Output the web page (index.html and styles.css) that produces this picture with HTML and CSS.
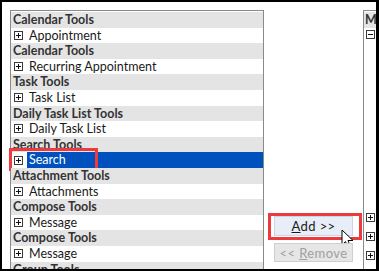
FILE: index.html
```html
<!DOCTYPE html>
<html>
<head>
<meta charset="utf-8">
<link rel="stylesheet" href="styles.css">
</head>
<body>
<div class="frame">
  <div class="list">
    <div class="row head">Calendar Tools</div>
    <div class="row item"><span class="box plus"></span><span class="label">Appointment</span></div>
    <div class="row head">Calendar Tools</div>
    <div class="row item"><span class="box plus"></span><span class="label">Recurring Appointment</span></div>
    <div class="row head">Task Tools</div>
    <div class="row item"><span class="box plus"></span><span class="label">Task List</span></div>
    <div class="row head">Daily Task List Tools</div>
    <div class="row item"><span class="box plus"></span><span class="label">Daily Task List</span></div>
    <div class="row head">Search Tools</div>
    <div class="row item selected"><span class="box plus"></span><span class="label">Search</span><span class="callout search-callout"></span></div>
    <div class="row head">Attachment Tools</div>
    <div class="row item"><span class="box plus"></span><span class="label">Attachments</span></div>
    <div class="row head">Compose Tools</div>
    <div class="row item"><span class="box plus"></span><span class="label">Message</span></div>
    <div class="row head">Compose Tools</div>
    <div class="row item"><span class="box plus"></span><span class="label">Message</span></div>
    <div class="row head">Group Tools</div>
  </div>
  <div class="middle">
    <div class="btn add"><span><u>A</u>dd &gt;&gt;</span><span class="callout add-callout"></span>
      <svg class="cursor" width="14" height="21" viewBox="0 0 14 21"><path d="M1 1 L1 16 L4.5 12.5 L7 18.5 L9.5 17.5 L7 11.5 L12 11.5 Z" fill="#fff" stroke="#000" stroke-width="1" stroke-linejoin="round"/></svg>
    </div>
    <div class="btn remove"><span>&lt;&lt; <u>R</u>emove</span></div>
  </div>
  <div class="right">
    <div class="rhead">Ma</div>
    <div class="rtop"><span class="box minus"></span></div>
    <div class="rrows">
      <div class="rrow"><span class="box plus"></span></div>
      <div class="rrow"><span class="box plus"></span></div>
      <div class="rrow"><span class="box plus"></span></div>
      <div class="rrow"><span class="box plus"></span></div>
    </div>
  </div>
</div>
</body>
</html>
```

FILE: styles.css
```css
html, body {
  margin: 0;
  padding: 0;
  background: #fff;
}
.frame {
  box-sizing: border-box;
  width: 379px;
  height: 271px;
  border: 2px solid #000;
  border-right-width: 3px;
  overflow: hidden;
  display: flex;
  align-items: flex-start;
  padding: 8px 0 0 8px;
  background: #fff;
  font-family: Lato, "Noto Sans", sans-serif;
  font-size: 12.5px;
  color: #1a1a1a;
}
.list {
  box-sizing: border-box;
  width: 254px;
  flex: none;
  border: 1px solid #8a8a8a;
  padding-top: 1px;
  height: 300px;
}
.row {
  height: 15.6px;
  line-height: 15.6px;
  display: flex;
  align-items: center;
  white-space: nowrap;
  position: relative;
}
.head {
  background: #e4e4e4;
  font-weight: bold;
  color: #333;
  padding-left: 2px;
}
.item {
  padding-left: 3px;
}
.label {
  padding-left: 6px;
  padding-right: 2px;
}
.selected .label {
  background: #0050be;
  color: #fff;
  flex: 1;
  height: 100%;
  margin-left: 4px;
  padding-left: 2px;
}
.box {
  box-sizing: border-box;
  width: 9px;
  height: 9px;
  border: 1px solid #3a3a3a;
  position: relative;
  flex: none;
  background: #fff;
}
.box::before {
  content: "";
  position: absolute;
  left: 1px;
  top: 3px;
  width: 5px;
  height: 1px;
  background: #111;
}
.plus::after {
  content: "";
  position: absolute;
  left: 3px;
  top: 1px;
  width: 1px;
  height: 5px;
  background: #111;
}
.callout {
  position: absolute;
  border: 3px solid #ec3b3f;
  box-sizing: border-box;
}
.search-callout {
  left: -2px;
  top: -4px;
  width: 89px;
  height: 23px;
}
.middle {
  width: 99px;
  flex: none;
  display: flex;
  flex-direction: column;
  align-items: center;
  padding-top: 206px;
  gap: 7px;
}
.btn {
  box-sizing: border-box;
  width: 79px;
  height: 20px;
  display: flex;
  align-items: center;
  justify-content: center;
  position: relative;
  letter-spacing: 0.4px;
  white-space: pre;
  font-size: 13px;
}
.add {
  background: #e8eef7;
  border: 1px solid #c9d5e6;
  color: #1a1a1a;
}
.add-callout {
  left: -7px;
  top: -4px;
  width: 94px;
  height: 27px;
}
.remove {
  background: #e6e6e6;
  border: 1px solid #cfcfcf;
  color: #a0a0a0;
  height: 19px;
}
.cursor {
  position: absolute;
  left: 66px;
  top: 12px;
}
.right {
  flex: 1;
  border-left: 1px solid #8a8a8a;
  border-top: 1px solid #8a8a8a;
  height: 300px;
  padding-top: 1px;
}
.rhead {
  background: #e4e4e4;
  font-weight: bold;
  color: #333;
  height: 16px;
  line-height: 16px;
  padding-left: 1px;
  white-space: nowrap;
}
.rtop {
  height: 12px;
  padding-left: 2px;
  display: flex;
  align-items: center;
}
.rrows {
  padding-top: 168px;
  padding-left: 2px;
}
.rrow {
  height: 19px;
  display: flex;
  align-items: center;
}
```
